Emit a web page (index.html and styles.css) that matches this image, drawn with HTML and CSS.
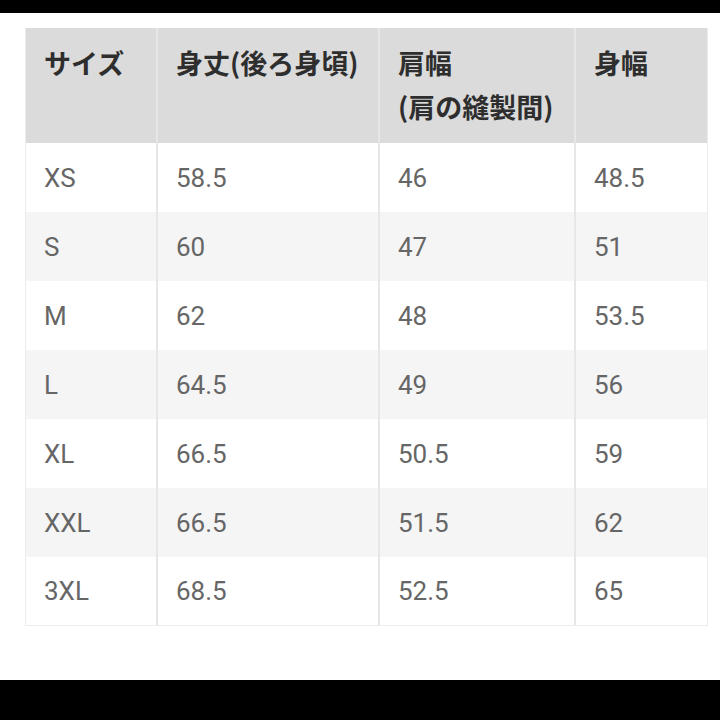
FILE: index.html
```html
<!DOCTYPE html>
<html lang="ja">
<head>
<meta charset="utf-8">
<link rel="stylesheet" href="styles.css">
</head>
<body>
<div class="bar bar-top"></div>
<main class="content">
  <div class="table">
    <div class="cell head">サイズ</div>
    <div class="cell head">身丈(後ろ身頃)</div>
    <div class="cell head">肩幅<br>(肩の縫製間)</div>
    <div class="cell head">身幅</div>

    <div class="cell">XS</div><div class="cell">58.5</div><div class="cell">46</div><div class="cell">48.5</div>
    <div class="cell alt">S</div><div class="cell alt">60</div><div class="cell alt">47</div><div class="cell alt">51</div>
    <div class="cell">M</div><div class="cell">62</div><div class="cell">48</div><div class="cell">53.5</div>
    <div class="cell alt">L</div><div class="cell alt">64.5</div><div class="cell alt">49</div><div class="cell alt">56</div>
    <div class="cell">XL</div><div class="cell">66.5</div><div class="cell">50.5</div><div class="cell">59</div>
    <div class="cell alt">XXL</div><div class="cell alt">66.5</div><div class="cell alt">51.5</div><div class="cell alt">62</div>
    <div class="cell last">3XL</div><div class="cell last">68.5</div><div class="cell last">52.5</div><div class="cell last">65</div>
  </div>
</main>
<div class="bar bar-bottom"></div>
</body>
</html>
```

FILE: styles.css
```css
* { box-sizing: border-box; }
html, body {
  margin: 0;
  padding: 0;
  background: #ffffff;
  width: 720px;
  height: 720px;
  overflow: hidden;
}
body {
  display: flex;
  flex-direction: column;
  font-family: Roboto, "Noto Sans CJK JP", sans-serif;
}
.bar {
  background: #000000;
  flex: none;
}
.bar-top { height: 13px; }
.bar-bottom { height: 40px; }
.content {
  flex: 1;
  padding: 15px 0 0 25px;
}
.table {
  display: grid;
  width: 683px;
  grid-template-columns: 130px 220px 194px 131px;
  grid-template-rows: 115px repeat(6, 69px) 68px;
  column-gap: 2px;
  background: #e7e7e7;
  border: 1px solid #ececec;
  border-top: none;
}
.cell {
  background: #ffffff;
  color: #666666;
  font-size: 26px;
  padding-left: 18px;
  display: flex;
  align-items: center;
}
.cell.alt { background: #f5f5f5; }
.cell.head {
  background: #dbdbdb;
  color: #2e2e2e;
  font-family: "Noto Sans CJK JP", sans-serif;
  font-weight: 700;
  font-size: 27px;
  line-height: 44px;
  align-items: flex-start;
  padding-top: 13px;
  letter-spacing: 0;
}
```
